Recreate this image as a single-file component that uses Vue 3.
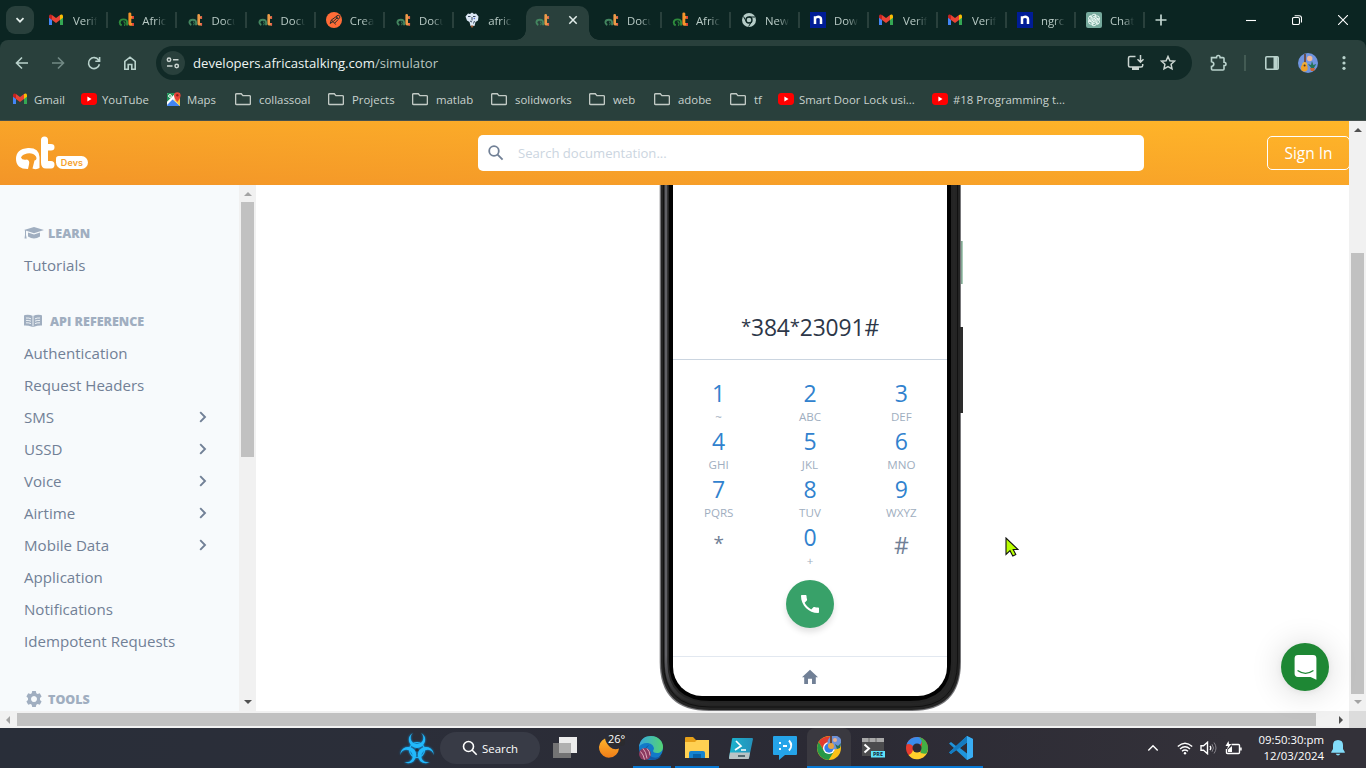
<script setup>
const tabs = [
  { icon: 'gmail', title: 'Verif' },
  { icon: 'at', title: 'Afric' },
  { icon: 'atlite', title: 'Docu' },
  { icon: 'atlite', title: 'Docu' },
  { icon: 'postman', title: 'Crea' },
  { icon: 'atlite', title: 'Docu' },
  { icon: 'goat', title: 'afric', last: true },
  { icon: 'atlite', title: '', active: true },
  { icon: 'atlite', title: 'Docu' },
  { icon: 'at', title: 'Afric' },
  { icon: 'chromegrey', title: 'New' },
  { icon: 'ngrok', title: 'Dow' },
  { icon: 'gmail', title: 'Verif' },
  { icon: 'gmail', title: 'Verif' },
  { icon: 'ngrok', title: 'ngrc' },
  { icon: 'gpt', title: 'Chat' },
]
const bookmarks = [
  ['gmail', 'Gmail'], ['youtube', 'YouTube'], ['maps', 'Maps'], ['folder', 'collassoal'],
  ['folder', 'Projects'], ['folder', 'matlab'], ['folder', 'solidworks'], ['folder', 'web'],
  ['folder', 'adobe'], ['folder', 'tf'], ['youtube', 'Smart Door Lock usi...'], ['youtube', '#18 Programming t...'],
]
const sections = [
  { icon: 'cap', title: 'LEARN', items: [['Tutorials']] },
  {
    icon: 'book', title: 'API REFERENCE', items: [
      ['Authentication'], ['Request Headers'], ['SMS', 1], ['USSD', 1], ['Voice', 1], ['Airtime', 1],
      ['Mobile Data', 1], ['Application'], ['Notifications'], ['Idempotent Requests'],
    ],
  },
  { icon: 'gear', title: 'TOOLS', items: [] },
]
const keys = [
  ['1', '~'], ['2', 'ABC'], ['3', 'DEF'], ['4', 'GHI'], ['5', 'JKL'], ['6', 'MNO'],
  ['7', 'PQRS'], ['8', 'TUV'], ['9', 'WXYZ'], ['*', ''], ['0', '+'], ['#', ''],
]
const dialed = '*384*23091#'.split('')
const tasks = [
  { icon: 'taskview' }, { icon: 'moon' }, { icon: 'edge', open: 'edgeopen' }, { icon: 'explorer', open: 'full' },
  { icon: 'powershell' }, { icon: 'chatapp' }, { icon: 'chrome', open: 'full', current: true },
  { icon: 'terminal', open: 'full' }, { icon: 'ring', open: 'full' }, { icon: 'vscode', open: 'full' },
]
</script>

<template>
  <div class="screen">
    <svg class="defs" width="0" height="0">
      <defs>
        <symbol id="gmail" viewBox="1 0 16 16">
          <path d="M1 4v9h3V7z" fill="#4285f4" /><path d="M15 4v9h-3V7z" fill="#34a853" />
          <path d="M1 4.2C1 2.4 2.8 2 4 3v5L1 5.8z" fill="#c5221f" /><path d="M15 4.2C15 2.4 13.2 2 12 3v5l3-2.2z" fill="#fbbc04" />
          <path d="M4 3l4 3.1L12 3v5l-4 3-4-3z" fill="#ea4335" />
        </symbol>
        <symbol id="at" viewBox="-.5 0 16 16">
          <path d="M3.2 13.4Q1.2 12.4 1.2 10.4 1.4 7.4 5 7.4 8.6 7.4 8.6 10.6V13.6" fill="none" stroke="#2e8b3c" stroke-width="1.9" />
          <path d="M5 9.6q1.6.2 1.6 2L6 13.8" fill="none" stroke="#2e8b3c" stroke-width="1.1" />
          <path d="M9.9 1.6q0-1 1.4-1t1.5 1V4h2.500v2.800h-2.500V11h2.500v2.800h-3.600q-1.800 0-1.800-2z" fill="#f7932a" /><path d="M13.700 4h1.700v2.800h-1.700zM13.700 11h1.700v2.800h-1.700z" fill="#e43b3b" />
        </symbol>
        <symbol id="atlite" viewBox="-1.500 0 16 16">
          <path d="M2.8 13Q.9 12.2.9 10.3 1.1 7.7 4.4 7.7 7.6 7.7 7.6 10.6V13.2" fill="none" stroke="#43855f" stroke-width="1.9" />
          <path d="M4.400 9.700q1.300.2 1.300 1.800l-.5 1.700" fill="none" stroke="#43855f" stroke-width="1" />
          <path d="M8.900 2.900q0-1 1.300-1t1.300 1v1.300h2v2.500h-2V11h2v2.600h-3q-1.600 0-1.600-1.800z" fill="#ed9b48" /><path d="M12.200 4.200h1.400v2.500h-1.400zM12.200 11h1.400v2.600h-1.400z" fill="#e75b4e" />
        </symbol>
        <symbol id="postman" viewBox="0 0 16 16"><circle cx="8" cy="8" r="8" fill="#ff6c37" /><path d="M11.2 3.9L5.4 8l1.700 1.600 4.600-4.300M7.100 9.600l-3 1.900L5.400 8M7 9.600l1.600 1.600 3.700-3.800M8.600 11.200l1 1.300" fill="none" stroke="#292e2b" stroke-width="1" /><circle cx="12.200" cy="5" r="1.700" fill="none" stroke="#292e2b" stroke-width=".9" /></symbol>
        <symbol id="goat" viewBox="0 0 16 16"><path d="M4 1.500l2 .5 2-1.500 2 1.500 2-.5 2.500 3-.5 4-2.500 1.500-1 4H6.500l-1-4L3 8.500l-1.500-4z" fill="#dce7f4" /><path d="M4 4.500h2.500M9 4.500h2.500M8 5v3.500M6 9l2 1M9.500 11.500l1-2.500" fill="none" stroke="#26384c" stroke-width=".9" /><path d="M6.700 13.500h2.800L9 15.500H7.200z" fill="#965834" /><circle cx="10.300" cy="6.500" r=".8" fill="#536bd5" /></symbol>
        <symbol id="chromegrey" viewBox="0 0 16 16"><circle cx="8" cy="8" r="7" fill="#b5ccc7" /><path d="M8 5h6M5.300 9.500L2.500 4.500M10.600 9.500l-3 5" stroke="#0b2522" stroke-width="1" /><circle cx="8" cy="8" r="3" fill="#b5ccc7" stroke="#0b2522" stroke-width="1.400" /></symbol>
        <symbol id="ngrok" viewBox="0 0 16 16"><path d="M0 0h16v16H0z" fill="#001c96" /><path d="M5 12V4.200M5 6q3-2.300 5.200-.6.900.8.800 2V12" fill="none" stroke="#fff" stroke-width="2.500" /></symbol>
        <symbol id="gpt" viewBox="0 0 16 16"><rect width="16" height="16" rx="2" fill="#75a99c" /><g fill="none" stroke="#f4fffb" stroke-width=".9"><g v-for="n in 6" :key="n" :transform="`rotate(${n * 60} 8 8)`"><path d="M5.600 6.600V4.700Q5.700 2.300 8 2.200q1.300 0 2.200 1L6.800 5.100v3.700" /></g></g></symbol>
        <symbol id="youtube" viewBox="0 0 16 16"><rect y="2" width="16" height="12" rx="3.400" fill="#f00" /><path d="M6.400 5.500L10.500 8l-4.100 2.500z" fill="#fff" /></symbol>
        <symbol id="maps" viewBox="0 0 16 16"><rect x="1" y="2" width="13" height="13" rx="1" fill="#e8ece8" /><path d="M1 3q0-1 1-1h8L1 11z" fill="#20945b" /><path d="M1 13l5-5 8 7H2q-1 0-1-1z" fill="#4285f4" /><path d="M1 11L10 2l2 1L1 14z" fill="#fff" /><path d="M8 9l6 6V7z" fill="#f7c540" /><path d="M11.300 11Q8 7 8 4.500A3.300 3.300 0 0 1 14.600 4.500Q14.600 7 11.300 11z" fill="#e84538" /><circle cx="11.300" cy="4.300" r="1.200" fill="#8d2020" /><circle cx="4" cy="5" r="1.400" fill="none" stroke="#fff" /></symbol>
        <symbol id="folder" viewBox="0 0 16 16"><path d="M1.600 2.800h4.700l1.600 1.800h6.500q1 0 1 1v6.900q0 1-1 1H1.600q-1 0-1-1V3.800q0-1 1-1z" fill="none" stroke="#c2cac5" stroke-width="1.400" /></symbol>
        <symbol id="cap" viewBox="0 0 20 14"><path d="M10 1l10 3-10 3.300L0 4zM4 6.500l6 2 6-2v4q-6 4-12 0zM1 4.500h1V9l.7 3.500H.5L1 9z" fill="#a0aec0" /></symbol>
        <symbol id="book" viewBox="0 0 18 14"><path d="M9 2Q5 0 1 1 0 1.200 0 2v9.500q4-.3 8 1.300h2q4-1.600 8-1.300V2q0-.8-1-1-4-1-8 1z" fill="#a0aec0" /><path d="M9 2v10M2 4q3-.2 5 .8M2 6.400q3-.2 5 .8M2 8.800q3-.2 5 .8M16 4q-3-.2-5 .8M16 6.400q-3-.2-5 .8M16 8.800q-3-.2-5 .8" fill="none" stroke="#f7fafc" stroke-width=".9" /></symbol>
        <symbol id="gear" viewBox="0 0 16 16"><path fill-rule="evenodd" d="M6.200 0h3.600l.5 2.200 1.300.8 2.200-.7 1.800 3.200L14 7v2l1.600 1.500-1.800 3.200-2.200-.7-1.300.8-.5 2.200H6.200l-.5-2.200-1.300-.8-2.200.7-1.800-3.200L2 9V7L.4 5.500l1.800-3.200 2.200.7 1.300-.8zM8 5a3 3 0 1 0 .01 0z" fill="#a0aec0" /></symbol>
        <symbol id="taskview" viewBox="0 0 24 24"><path d="M0 7h18v15H0z" fill="#737374" /><path d="M6 1h18v16H6z" fill="#ececec" /><path d="M6 7h12v10H6z" fill="#b0b0b0" /></symbol>
        <symbol id="moon" viewBox="0 0 24 24"><path d="M8 2.500a10 10 0 1 0 14 10q-5 2-9-1.500-4-3.500-5-8.500z" fill="url(#orange)" /></symbol>
        <symbol id="edge" viewBox="0 0 24 24"><circle cx="12" cy="12" r="12" fill="#1279c8" /><path d="M0 11C1 3 6 0 12 0c8 0 12 6 12 11 0 4-3 6-6 6-5 0-4-3-3-4 0-4-4-6-7-6-4 0-7 2-8 4z" fill="url(#teal)" /><path d="M10 9q-5 5 0 10 5 5 12 1-3 4-8 4Q4 23 6 14q1-4 4-5z" fill="#1259a6" /><circle cx="6" cy="18" r="6" fill="#8c3a60" /><path d="M4 12.500q3 3 4 10M8 12.500q3 3 3 7M1.500 15.500q3 3 4 8" fill="none" stroke="#e4b5c4" stroke-width=".9" /></symbol>
        <symbol id="explorer" viewBox="0 0 24 24"><path d="M0 2q0-1 1-1h7l3 3h12q1 0 1 1v3H0z" fill="#e6a019" /><path d="M0 6h10l2-2h12v18H0z" fill="#ffd052" /><path d="M4 22v-5q0-2 2-2h12q2 0 2 2v5z" fill="#1683ce" /><path d="M8 18h8v4H8z" fill="#0862a7" /></symbol>
        <symbol id="powershell" viewBox="0 0 24 24"><path d="M4 2h19q1 0 1 1l-4 19q0 1-1 1H1q-1 0-1-1L3 3q0-1 1-1z" fill="url(#psg)" /><path d="M1 16.500h20L20 22q0 1-1 1H1q-1 0-1-1z" fill="#b8c3c5" /><path d="M7 5l5 5-6 4M12 14h5" fill="none" stroke="white" stroke-width="1.700" /><path d="M9 20h7" stroke="#26434b" stroke-width="1.400" /></symbol>
        <symbol id="chatapp" viewBox="0 0 24 24"><path d="M1 0h22q1 0 1 1v17q0 1-1 1H12l-6 5v-5H1q-1 0-1-1V1q0-1 1-1z" fill="#25a4e9" /><path d="M7 6v2M7 12v2M10 10h4M16 4.500q4.500 5 0 10" fill="none" stroke="#fff" stroke-width="1.900" /></symbol>
        <symbol id="chrome" viewBox="0 0 24 24"><circle cx="12" cy="12" r="12" fill="#fbc116" /><path d="M1.700 6A12 12 0 0 1 22.300 6H12l-5 9z" fill="#e33b2e" /><path d="M1.700 6a12 12 0 0 0 10 18l5.500-9H7z" fill="#279847" /><circle cx="12" cy="12" r="6" fill="#fff" /><circle cx="12" cy="12" r="4.700" fill="#357de8" /><circle cx="17.500" cy="6.500" r="7" fill="#6d91d7" /><path d="M14 0v9" stroke="#64351a" stroke-width="1.600" /><circle cx="14" cy="10" r="3" fill="#e6a341" /><circle cx="18" cy="4" r="2" fill="#eab08c" /><path d="M20 13l-2-5 3 2 3-3-1 5z" fill="#286d51" /></symbol>
        <symbol id="terminal" viewBox="0 0 24 24"><path d="M1 2h22v18H1z" fill="#4c4c4e" /><path d="M1 2h22v4H1z" fill="#a9a9a9" /><path d="M8 2v4M15 2v4" stroke="#666" /><path d="M3.500 8.500l4.500 4-4.500 4" fill="none" stroke="white" stroke-width="2" /><path d="M10 15h14v6.500H10z" fill="#5de4fa" /></symbol>
        <symbol id="ring" viewBox="0 0 24 24"><circle cx="12" cy="12" r="11" fill="#e53b2f" /><path d="M3.500 19A11 11 0 0 0 23 13.500Q20 17 16 16L8 14q-1 4-4.500 5z" fill="#ffcf2b" /><path d="M1.500 8.500A11 11 0 0 1 17.500 2.500L16 8 8 10Q5 7 1.500 8.500z" fill="#3a8cec" /><path d="M14 1.200A11 11 0 0 1 21.500 17.500q-2 .5-6-.5l1-7q2-5-2.500-8.800z" fill="#42af45" /><circle cx="12" cy="12" r="4.500" fill="#2c2b34" /></symbol>
        <symbol id="vscode" viewBox="0 0 24 24"><path d="M18 0l6 3v18l-6 3L7 14l-5 4-2-1.400L5 12 0 7.400 2 6l5 4zM18 6.500L11 12l7 5.500z" fill="#1f94db" /><path d="M18 0l6 3v18l-6 3z" fill="#39adf3" /><path d="M0 16.600L18 0v6.500L2 18z" fill="#147bc0" /></symbol>
        <symbol id="avatar" viewBox="0 0 20 20"><circle cx="10" cy="10" r="10" fill="#7095df" /><path d="M7 1v12" stroke="#683920" stroke-width="1.500" /><circle cx="6.700" cy="11.500" r="2.500" fill="#efb038" /><circle cx="6.300" cy="15" r="3.400" fill="#efa129" /><circle cx="6.600" cy="12.600" r="1" fill="#4c3426" /><circle cx="11.700" cy="5.500" r="2.700" fill="#f0b99b" /><path d="M14 16l-4-5 3 1 1-4 1.300 4 3-1-3 5z" fill="#257357" /><path d="M12 15h5l-1 3h-3z" fill="#c76637" /></symbol>
        <linearGradient id="orange" x2="0" y2="1"><stop stop-color="#ffb52c" /><stop offset="1" stop-color="#ef7d18" /></linearGradient>
        <linearGradient id="teal"><stop stop-color="#37a8df" /><stop offset="1" stop-color="#54d373" /></linearGradient>
        <linearGradient id="psg"><stop stop-color="#1ab5cf" /><stop offset="1" stop-color="#2590ba" /></linearGradient>
      </defs>
    </svg>

    <header class="tabstrip">
      <button class="tabsearch"><svg width="10" height="10" viewBox="0 0 10 10"><path d="M1.500 3.200L5 6.700l3.500-3.500" /></svg></button>
      <div v-for="(t, i) in tabs" :key="i" class="tab" :class="{ active: t.active, last: t.last }">
        <svg class="i16"><use :href="'#' + t.icon" /></svg>
        <span v-if="!t.active" class="tabtitle">{{ t.title }}</span>
        <svg v-else class="tabclose" width="10" height="10" viewBox="0 0 10 10"><path d="M1.300 1.300l7.400 7.400M8.700 1.300L1.300 8.700" /></svg>
      </div>
      <svg class="plus" width="12" height="12" viewBox="0 0 12 12"><path d="M6 .5v11M.5 6h11" /></svg>
      <div class="wincontrols">
        <svg width="10" height="10"><path d="M0 5.500h10" /></svg>
        <svg width="10" height="10" viewBox="0 0 10 10"><rect x=".5" y="2.500" width="7" height="7" rx="1.400" /><path d="M2.600 .7h4.700q2.200 0 2.200 2.200v4.500" /></svg>
        <svg width="10" height="10" viewBox="0 0 10 10"><path d="M0 0l10 10M10 0L0 10" /></svg>
      </div>
    </header>

    <div class="chrome">
      <div class="toolbar">
        <span class="nav"><svg width="16" height="16" viewBox="0 0 16 16"><path d="M8 2.500L2.500 8 8 13.500M2.500 8H14" /></svg></span>
        <span class="nav dim"><svg width="16" height="16" viewBox="0 0 16 16"><path d="M8 2.500L13.500 8 8 13.500M13.500 8H2" /></svg></span>
        <span class="nav"><svg width="16" height="16" viewBox="0 0 16 16"><path d="M13.400 9.300A5.500 5.500 0 1 1 12.600 5L13.500 6M13.600 2v4.200H9.300" /></svg></span>
        <span class="nav"><svg width="16" height="16" viewBox="0 0 16 16"><path d="M2.800 6.400L8 2.200l5.200 4.200v7.900H9.800V9.500H6.200v4.800H2.800z" /></svg></span>
        <div class="omnibox">
          <span class="siteinfo"><svg width="14" height="12" viewBox="0 0 14 12"><circle cx="3" cy="2.800" r="1.700" /><path d="M7 2.800h5.500M1 9h5.500" /><circle cx="10.700" cy="9" r="1.700" /></svg></span>
          <span class="url">developers.africastalking.com<em>/simulator</em></span>
          <svg class="cast" width="18" height="16" viewBox="0 0 18 16"><path d="M8.500 1.500H3q-1.500 0-1.500 1.500v7.500Q1.500 12 3 12h11q1.700 0 1.700-1.500V9M13.500 0v7M10.500 4.300l3 3 3-3" /><path class="solid" d="M5 12h7v3H5z" /></svg>
          <svg width="16" height="16" viewBox="0 0 16 16"><path d="M8 1.500l1.900 4.200 4.600.5-3.400 3.100.9 4.600L8 11.600l-4 2.300.9-4.600L1.500 6.200l4.600-.5z" /></svg>
        </div>
        <span class="nav ext"><svg width="18" height="18" viewBox="0 0 18 18"><path d="M2.500 3.600h5Q7.500 1.500 9.300 1.500T11.100 3.600H14q1 0 1 1v3.600q2 0 2 1.700T15 11.600V15q0 1-1 1H3.500q-1 0-1-1v-2.500q2.300-.4 2.300-2.400T2.500 7.700z" /></svg></span>
        <i class="divider"></i>
        <span class="nav"><svg width="16" height="16" viewBox="0 0 16 16"><rect x="1.800" y="1.800" width="12.400" height="12.400" rx="1" /><path class="solid" d="M9.500 2h4v12h-4z" /></svg></span>
        <span class="nav"><svg class="avatar"><use href="#avatar" /></svg></span>
        <span class="nav"><svg width="16" height="16" viewBox="0 0 16 16"><g class="dots"><circle cx="8" cy="2.700" r="1.600" /><circle cx="8" cy="8" r="1.600" /><circle cx="8" cy="13.300" r="1.600" /></g></svg></span>
      </div>
      <nav class="bookmarks">
        <span v-for="b in bookmarks" :key="b[1]" class="bookmark" :class="b[0]"><svg class="i16"><use :href="'#' + b[0]" /></svg>{{ b[1] }}</span>
      </nav>
    </div>

    <main class="viewport">
      <div class="page">
        <header class="sitebar">
          <div class="brand">
            <svg width="39" height="34" viewBox="0 0 39 34"><path d="M12 33Q0 33 0 23 0 13 12 12q11-.5 11.500 9v11q-3 2-7 .5l2-8q3-1 1.500-4-3-4-9-3-5 1-6 4 1 3 6 2 3 1 2 5z" /><path d="M25 4q0-3.500 3.500-3.500T32 4v4h3q3.500 0 3.500 3.300T35 14.600h-3V25h3q3.500 0 3.500 3.700T35 32.500h-5q-5 0-5-6z" /></svg>
            <span class="devs">Devs</span>
          </div>
          <div class="search"><svg width="16" height="16" viewBox="0 0 16 16"><circle cx="6" cy="6" r="4.800" /><path d="M9.600 9.600l5 5" /></svg><span>Search documentation...</span></div>
          <button class="signin">Sign In</button>
        </header>
        <div class="body">
          <aside class="sidebar">
            <section v-for="s in sections" :key="s.title">
              <h3 :class="s.icon"><svg><use :href="'#' + s.icon" /></svg>{{ s.title }}</h3>
              <a v-for="it in s.items" :key="it[0]">{{ it[0] }}<svg v-if="it[1]" width="8" height="12" viewBox="0 0 8 12"><path d="M1.200 1.200L6 6l-4.800 4.800" /></svg></a>
            </section>
          </aside>
          <div class="vbar sidescroll"><b class="up pale"></b><i></i><b class="down"></b></div>
          <div class="content">
            <div class="phone">
              <svg class="frame" width="304" height="526" viewBox="0 0 304 526">
                <path d="M300 56h3v43h-3z" fill="#a9cbb8" /><path d="M300 56h1.500v43H300z" fill="#5f7f6d" /><path d="M300 142h3v86h-3z" fill="#2c2c2c" />
                <path d="M-.3-5H301V477Q301 526 252 526H49Q-.3 526-.3 477z" fill="#77777a" />
                <path d="M1-5H300V477Q300 525 251 525H50Q1 525 1 477z" fill="#242424" />
                <path d="M300 142h1.500v86H300z" fill="#2c2c2c" />
                <path d="M3.500-5V477Q3.500 522 50 522H251Q297.500 522 297.500 477V-5" fill="none" stroke="#111" />
                <path d="M6-5V477Q6 519 50 519" fill="none" stroke="url(#rim)" stroke-width="2.600" />
                <path d="M50 519H251Q294 519 294 477V-5" fill="none" stroke="#262626" stroke-width="2" />
                <path d="M9-5H291V476Q291 516 249 516H51Q9 516 9 476z" fill="#020202" />
                <linearGradient id="rim" gradientUnits="userSpaceOnUse" x1="0" y1="470" x2="0" y2="519"><stop stop-color="#606065" /><stop offset="1" stop-color="#262626" /></linearGradient>
              </svg>
              <div class="display">
                <div class="dialed"><span v-for="(c, i) in dialed" :key="i" :class="{ ast: c === '*' }">{{ c }}</span></div>
                <div class="keypad">
                  <div v-for="k in keys" :key="k[0]" class="key" :class="{ star: k[0] === '*', hash: k[0] === '#' }"><strong>{{ k[0] }}</strong><small>{{ k[1] }}</small></div>
                </div>
                <div class="call"><svg width="24" height="24" viewBox="0 0 24 24"><path d="M6.620 10.790c1.440 2.830 3.760 5.140 6.590 6.590l2.200-2.200c.27-.27.67-.36 1.020-.24 1.120.37 2.330.57 3.570.57.55 0 1 .45 1 1V20c0 .55-.45 1-1 1-9.390 0-17-7.610-17-17 0-.55.45-1 1-1h3.500c.55 0 1 .45 1 1 0 1.250.2 2.450.57 3.570.11.35.03.74-.25 1.020z" /></svg></div>
                <div class="homebar"><svg width="18" height="16" viewBox="0 0 18 16"><path d="M9 .8l8 7.500h-2.200V15H11V9.800H7V15H3.200V8.300H1z" /></svg></div>
              </div>
            </div>
          </div>
          <div class="messenger"><svg width="23" height="25" viewBox="0 0 23 25"><path d="M4 0h15q3.400 0 3.400 3.400V24.700L16.500 22H4Q.6 22 .6 18.600V3.400Q.6 0 4 0z" fill="#fff" /><path d="M4 15.800q7.500 5.200 15 0" fill="none" stroke="#1e8734" stroke-width="1.300" stroke-linecap="round" /></svg></div>
          <svg class="cursor" width="14" height="20" viewBox="0 0 14 20"><path d="M1 1v16.500l4-3.800L7.800 19l3-1.500-2.600-5H13z" fill="#b9ff00" stroke="#111" stroke-width="1.100" /></svg>
        </div>
      </div>
      <div class="vbar pagescroll"><b class="up"></b><i></i><b class="down pale"></b></div>
    </main>
    <div class="hbar"><b class="left"></b><i></i><b class="right"></b><span></span></div>

    <footer class="taskbar">
      <svg class="bio" width="34" height="32" viewBox="0 0 34 32">
        <g v-for="n in 3" :key="n" :transform="`rotate(${n * 120} 17 18)`">
          <path class="horn" d="M13 .8Q8 4 9 9.500 11 15.500 17 16 23 15.500 25 9.500 26 4 21 .8 24.500 4.500 22.800 8.500 21 12 17 12T11.200 8.500Q9.500 4.500 13 .8z" />
        </g>
        <circle class="core" cx="17" cy="18" r="7.500" />
        <circle class="hub" cx="17" cy="18" r="1.800" />
      </svg>
      <div class="tasksearch"><svg width="16" height="16" viewBox="0 0 16 16"><circle cx="6.500" cy="6.500" r="5" /><path d="M10 10l4.700 4.700" /></svg>Search</div>
      <div v-for="t in tasks" :key="t.icon" class="task" :class="[t.icon, t.open, { current: t.current }]"><svg class="taskicon"><use :href="'#' + t.icon" /></svg><span v-if="t.icon === 'moon'" class="temp">26°</span><span v-if="t.icon === 'terminal'" class="pre">PRE</span></div>
      <div class="tray">
        <svg width="12" height="8" viewBox="0 0 12 8"><path d="M1.300 6.500L6 1.700l4.700 4.800" /></svg>
        <svg class="wifi" width="16" height="13" viewBox="0 0 16 13"><path d="M.8 4.500q7.200-6.700 14.400 0M3 7q5-4.500 10 0M5 9.300q3-2.500 6 0" /><circle cx="8" cy="11.200" r="1.200" /></svg>
        <svg class="sound" width="17" height="14" viewBox="0 0 17 14"><path d="M1 4.800h2.500l4-3.500v11.400l-4-3.500H1zM10 5q1.500 2 0 4" /><path class="faint" d="M12 3.200q3 3.800 0 7.600M14 1.500q4 5.500 0 11" /></svg>
        <svg class="battery" width="17" height="14" viewBox="0 0 17 14"><path d="M6.500 3.500h7q1 0 1 1v7q0 1-1 1h-11q-1 0-1-1V8M16 6.500v3" /><path d="M3.500 0L.5 5H3L2 8.500 6.300 3H4z" fill="#fff" stroke="none" /><path d="M3 11V8.500L7 5v6z" fill="#fff" stroke="none" /></svg>
        <div class="clock"><span>09:50:30:pm</span><span>12/03/2024</span></div>
        <svg class="bell" width="14" height="16" viewBox="0 0 14 16"><path d="M7 0q5 .2 5 5v4l1.800 3v.8H.2V12L2 9V5Q2 .2 7 0zM4.700 13.800h4.600Q8.500 15.600 7 15.600t-2.300-1.800z" /></svg>
      </div>
    </footer>
  </div>
</template>

<style>
html, body { margin: 0; overflow: hidden; }
</style>

<style scoped>
* { box-sizing: border-box; }
.screen { width: 1366px; height: 768px; display: flex; flex-direction: column; overflow: hidden; font-family: "Open Sans", "Noto Sans", sans-serif; background: #0b2522; }
.defs { position: absolute; }
svg { flex: none; display: block; }
button { font: inherit; padding: 0; border: 0; }
.i16 { width: 16px; height: 16px; }

.tabstrip { height: 40px; display: flex; align-items: center; padding-left: 6px; background: #0b2522; color: #b9cbc6; }
.tabsearch { width: 28px; height: 28px; margin-right: 4px; border-radius: 9px; background: #29403c; display: grid; place-items: center; }
.tabsearch path { fill: none; stroke: #e3eeeb; stroke-width: 1.7; }
.tab { position: relative; width: 69.2px; height: 40px; padding-left: 11px; display: flex; align-items: center; gap: 8px; flex: none; font-size: 11.4px; }
.tab::after { content: ""; position: absolute; right: -1px; top: 12px; width: 2px; height: 16px; background: #29403c; }
.tab.last::after, .tab.active::after { display: none; }
.tab.active ~ .tab { width: 69px; }
.tabtitle { width: 29px; white-space: nowrap; mask-image: linear-gradient(90deg, #000 45%, transparent 84%); }
.tab.active { width: 63px; height: 34px; margin: 6px 3px 0 3.6px; padding-left: 9px; background: #29403c; border-radius: 10px 10px 0 0; }
.tab.active::before { content: ""; position: absolute; left: -10px; right: -10px; bottom: 0; height: 10px; background: radial-gradient(circle at 0 0, transparent 9.5px, #29403c 10px) left / 10px 10px no-repeat, radial-gradient(circle at 100% 0, transparent 9.5px, #29403c 10px) right / 10px 10px no-repeat; }
.tab.active .i16, .tabclose { margin-top: -6px; }
.tab.active .i16 { margin-left: -1px; }
.tabclose { margin-left: 10px; }
.tabclose path { fill: none; stroke: #e3eeeb; stroke-width: 1.5; }
.plus { margin-left: 11px; }
.plus path { stroke: #c2d5d0; stroke-width: 1.7; }
.wincontrols { margin-left: auto; display: flex; gap: 36px; padding-right: 18px; }
.wincontrols svg { fill: none; stroke: #fff; stroke-width: 1.1; }

.chrome { height: 81px; background: #29403c; border-radius: 8px 8px 0 0; border-bottom: 1px solid #46514e; }
.toolbar { height: 46px; display: flex; align-items: center; padding: 0 4px; }
.nav { width: 36px; height: 36px; display: grid; place-items: center; flex: none; }
.nav svg { fill: none; stroke: #b9d2cc; stroke-width: 1.6; overflow: visible; }
.nav .dots, .nav .solid { fill: #b9d2cc; stroke: none; }
.nav.dim { opacity: .5; }
.nav .avatar { width: 20px; height: 20px; stroke: none; }
.omnibox { width: 1036px; height: 34px; margin: 0 8px; border-radius: 17px; background: #112a27; display: flex; align-items: center; padding: 0 16px 0 5px; }
.siteinfo { width: 24px; height: 24px; border-radius: 50%; background: #29403c; display: grid; place-items: center; }
.siteinfo svg, .omnibox > svg { fill: none; stroke: #cbd5d1; stroke-width: 1.5; }
.url { margin-left: 8px; color: #eef4f2; font-size: 13.15px; flex: 1; white-space: nowrap; }
.url em { font-style: normal; color: #b9c6c1; }
.cast { margin-right: 15px; }
.cast .solid { fill: #cbd5d1; stroke: none; }
.divider { width: 2px; height: 16px; margin: 0 8px; background: #435b54; }
.bookmarks { height: 26px; display: grid; grid-template-columns: 68px 85px 69px 93px 84px 79px 98px 65px 76px 48px 154px auto; align-items: center; padding-left: 13px; font-size: 11.4px; color: #c8d2ce; white-space: nowrap; }
.bookmark { display: flex; align-items: center; gap: 5px; }
.folder { gap: 8px; }

.viewport { height: 590px; display: flex; }
.page { width: 1349px; display: flex; flex-direction: column; }
.sitebar { height: 64px; display: grid; grid-template-columns: 478px 666px 123px 82px; align-items: center; background: linear-gradient(183deg, #ffb629 0%, #f39528 100%); }
.brand { display: flex; align-items: flex-end; padding-left: 16px; gap: 1px; }
.brand path { fill: #fff; }
.devs { width: 32px; height: 13px; margin-bottom: 1px; border-radius: 3px 7px 7px 7px; background: #fff; color: #f5a12b; font: 600 9px/13px "Inter", sans-serif; text-align: center; letter-spacing: .1px; }
.search { height: 36px; background: #fff; border-radius: 5px; display: flex; align-items: center; padding-left: 10px; color: #cbd5e0; font-size: 13.1px; }
.search svg { fill: none; stroke: #718096; stroke-width: 1.8; margin-right: 14px; }
.signin { grid-column: 4; height: 34px; margin-right: -1px; border: 1px solid #fff; border-radius: 5px; background: transparent; color: #fff; font-size: 15.5px; }
.body { height: 526px; display: flex; position: relative; background: #fff; }
.sidebar { width: 239px; padding: 32px 32px 0 24px; background: #f7fafc; overflow: hidden; }
.sidebar section { margin-bottom: 24px; }
.sidebar h3, .sidebar a { height: 32px; margin: 0; display: flex; align-items: center; white-space: nowrap; }
.sidebar h3 { color: #a0aec0; font-size: 12.5px; font-weight: 800; }
.sidebar h3 svg { width: 20px; height: 14px; margin-right: 4px; }
.sidebar h3.book svg { width: 18px; margin-right: 8px; }
.sidebar h3.gear { height: 36px; }
.sidebar h3.gear svg { width: 16px; height: 16px; margin: 0 6px 0 2px; }
.sidebar a { color: #718096; font-size: 15.1px; justify-content: space-between; }
.sidebar a svg { fill: none; stroke: #718096; stroke-width: 1.9; }

.vbar { width: 17px; background: #f1f1f1; display: flex; flex-direction: column; align-items: center; flex: none; }
.vbar i { width: 13px; background: #c1c1c1; }
.vbar b, .hbar b { width: 0; height: 0; border: 4px solid transparent; }
.vbar .up { border-top: 0; border-bottom-color: #505050; margin-top: 7px; }
.vbar .down { border-bottom: 0; border-top-color: #505050; margin-top: auto; margin-bottom: 7px; }
.vbar .up.pale { border-bottom-color: #a3a3a3; }
.vbar .down.pale { border-top-color: #a3a3a3; }
.sidescroll i { height: 255px; margin-top: 6px; }
.pagescroll i { height: 441px; margin-top: 121px; }
.hbar { height: 17px; background: #f1f1f1; display: flex; align-items: center; }
.hbar .left { border-left: 0; border-right-color: #a3a3a3; margin: 0 7px 0 6px; }
.hbar i { width: 1299px; height: 13px; background: #c1c1c1; }
.hbar .right { border-right: 0; border-left-color: #505050; margin-left: auto; margin-right: 6px; }
.hbar span { width: 17px; height: 17px; background: #dcdcdc; }

.content { width: 1093px; padding-left: 404px; }
.phone { position: relative; width: 304px; height: 526px; padding: 0 0 15px 13px; }
.frame { position: absolute; left: 0; top: 0; overflow: visible; clip-path: inset(0 -2px 0 -2px); }
.display { position: relative; width: 274px; height: 511px; background: #fff; border-radius: 0 0 29px 29px; display: flex; flex-direction: column; align-items: center; overflow: hidden; }
.dialed { width: 274px; height: 175px; border-bottom: 1px solid #cbd5e0; color: #2d3748; font-size: 22.8px; line-height: 34px; letter-spacing: -.12px; display: flex; justify-content: center; padding-top: 126px; }
.dialed .ast { width: 10px; font-size: 18.5px; line-height: 29px; text-align: center; }
.keypad { width: 274px; margin-top: 20px; display: grid; grid-template-columns: repeat(3, 1fr); }
.key { height: 48px; text-align: center; display: flex; flex-direction: column; }
.key strong { color: #3182ce; font-weight: 400; font-size: 23px; line-height: 26px; }
.key small { color: #a0aec0; font-size: 11.6px; line-height: 17px; padding-top: 2px; }
.key.star strong, .key.hash strong { color: #718096; }
.key.star strong { padding-top: 6px; font-size: 19px; }
.key.hash strong { padding-top: 8px; }
.call { width: 48px; height: 48px; margin-top: 8px; border-radius: 50%; background: #38a169; display: grid; place-items: center; box-shadow: 0 4px 6px rgba(0,0,0,.12); flex: none; }
.call path { fill: #fff; }
.homebar { width: 274px; margin-top: 28px; height: 40px; border-top: 1px solid #e2e8f0; display: grid; place-items: center; }
.homebar path { fill: #718096; }
.messenger { position: absolute; left: 1281px; top: 458px; width: 48px; height: 48px; border-radius: 50%; background: #1e8734; display: grid; place-items: center; box-shadow: 0 1px 6px rgba(0,0,0,.06), 0 2px 32px rgba(0,0,0,.16); }
.cursor { position: absolute; left: 1005px; top: 352px; }

.taskbar { height: 40px; display: flex; align-items: center; padding-left: 400px; background: linear-gradient(90deg, #292e39, #2b2e39 30%, #2b2a34 60%, #333139 90%); color: #fff; }
.bio { margin-right: 6px; filter: drop-shadow(0 0 1px #0a9cf0); }
.bio .horn { fill: #22b9fb; }
.bio .core { fill: none; stroke: #22b9fb; stroke-width: 1.2; }
.bio .hub { fill: #2a2e39; }
.tasksearch { width: 100px; height: 32px; margin-right: 3px; border-radius: 16px; background: #383b46; display: flex; align-items: center; padding-left: 22px; gap: 4px; font-size: 11.4px; }
.tasksearch svg { fill: none; stroke: #fff; stroke-width: 1.6; }
.task { position: relative; width: 44px; height: 40px; display: grid; place-items: center; flex: none; }
.taskicon { width: 24px; height: 24px; }
.task.current { background: #3a3940; }
.task.full { border-bottom: 2px solid #0879d5; padding-top: 2px; }
.task.edgeopen { background: linear-gradient(#0879d5, #0879d5) 2px 38px / 38px 2px no-repeat; padding-right: 4px; }
.temp { position: absolute; left: 21px; top: 4px; border-radius: 4px; background: #2b2b2f; font-size: 11px; line-height: 14px; }
.pre { position: absolute; left: 20px; top: 23px; width: 14px; color: #123; font: bold 5.5px/7px "Open Sans", sans-serif; text-align: center; }
.tray { margin-left: auto; display: flex; align-items: center; padding-right: 21px; }
.tray svg { fill: none; stroke: #fff; stroke-width: 1.4; }
.wifi { margin-left: 18px; }
.wifi circle { fill: #fff; stroke: none; }
.sound { margin-left: 7px; }
.sound .faint { stroke: #85838a; stroke-width: 1; }
.battery { margin-left: 8px; }
.clock { width: 82px; display: flex; flex-direction: column; text-align: right; font-size: 11.4px; line-height: 16px; }
.tray .bell { margin-left: 7px; fill: #83dcf9; stroke: none; }
</style>
